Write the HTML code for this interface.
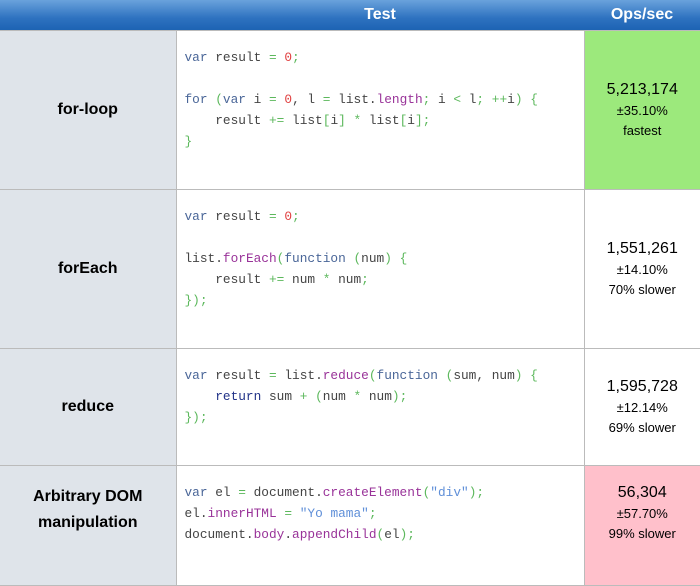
<!DOCTYPE html>
<html><head><style>
*{margin:0;padding:0;box-sizing:border-box}
body{width:700px;height:560px;overflow:hidden;background:#fff;font-family:"Liberation Sans",sans-serif}
table{border-collapse:collapse;width:700px;table-layout:fixed}
th{height:30px;color:#fff;font-size:16px;font-weight:bold;background:linear-gradient(#6aa2dc,#2e72c0 60%,#1d63b3);padding:0}
td{border:1px solid #bbb;padding:0}
td.n{background:#dfe4ea;text-align:center;font-weight:bold;font-size:16px;line-height:26px;color:#000;border-left:none}
td.c{vertical-align:top;padding:16px 8px 0 8px;font-family:"Liberation Mono",monospace;font-size:12.8px;line-height:21px;color:#444;white-space:pre}
td.r{text-align:center;color:#000;font-size:13px;line-height:20px;border-right:none}
td.r b{font-weight:normal;font-size:16px;display:block;line-height:22px}
.k{color:#4a6698}.p{color:#5cb85c}.d{color:#e04040}.m{color:#993399}.s{color:#5f8fd8}.f{color:#4a6698}.rt{color:#223388}
tr:first-child th{border:none}
tr.last td{vertical-align:top}
tr.last td.n{padding-top:18px}
tr.last td.r{padding-top:16px}
</style></head><body>
<table>
<colgroup><col style="width:176px"><col style="width:408px"><col style="width:116px"></colgroup>
<tr><th></th><th>Test</th><th>Ops/sec</th></tr>
<tr style="height:159px"><td class="n">for-loop</td><td class="c"><span class="k">var</span> result <span class="p">=</span> <span class="d">0</span><span class="p">;</span>

<span class="k">for</span> <span class="p">(</span><span class="k">var</span> i <span class="p">=</span> <span class="d">0</span>, l <span class="p">=</span> list.<span class="m">length</span><span class="p">;</span> i <span class="p">&lt;</span> l<span class="p">;</span> <span class="p">++</span>i<span class="p">)</span> <span class="p">{</span>
    result <span class="p">+=</span> list<span class="p">[</span>i<span class="p">]</span> <span class="p">*</span> list<span class="p">[</span>i<span class="p">];</span>
<span class="p">}</span></td><td class="r" style="background:#9ce97c"><b>5,213,174</b>±35.10%<br>fastest</td></tr>
<tr style="height:159px"><td class="n">forEach</td><td class="c"><span class="k">var</span> result <span class="p">=</span> <span class="d">0</span><span class="p">;</span>

list.<span class="m">forEach</span><span class="p">(</span><span class="f">function</span> <span class="p">(</span>num<span class="p">)</span> <span class="p">{</span>
    result <span class="p">+=</span> num <span class="p">*</span> num<span class="p">;</span>
<span class="p">});</span></td><td class="r"><b>1,551,261</b>±14.10%<br>70% slower</td></tr>
<tr style="height:117px"><td class="n">reduce</td><td class="c"><span class="k">var</span> result <span class="p">=</span> list.<span class="m">reduce</span><span class="p">(</span><span class="f">function</span> <span class="p">(</span>sum, num<span class="p">)</span> <span class="p">{</span>
    <span class="rt">return</span> sum <span class="p">+</span> <span class="p">(</span>num <span class="p">*</span> num<span class="p">);</span>
<span class="p">});</span></td><td class="r"><b>1,595,728</b>±12.14%<br>69% slower</td></tr>
<tr class="last" style="height:120px"><td class="n">Arbitrary DOM<br>manipulation</td><td class="c"><span class="k">var</span> el <span class="p">=</span> document.<span class="m">createElement</span><span class="p">(</span><span class="s">"div"</span><span class="p">);</span>
el.<span class="m">innerHTML</span> <span class="p">=</span> <span class="s">"Yo mama"</span><span class="p">;</span>
document.<span class="m">body</span>.<span class="m">appendChild</span><span class="p">(</span>el<span class="p">);</span></td><td class="r" style="background:#ffc0cb"><b>56,304</b>±57.70%<br>99% slower</td></tr>
</table>
</body></html>
